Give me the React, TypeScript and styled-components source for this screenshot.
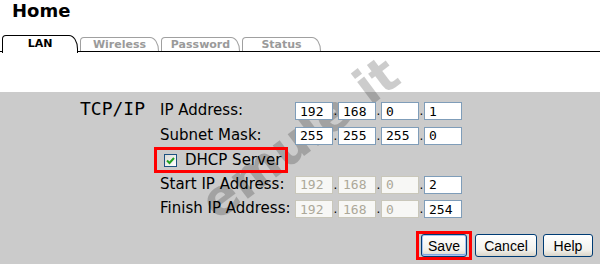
import styled, { createGlobalStyle } from 'styled-components';

const GlobalStyle = createGlobalStyle`
	html, body {
		margin: 0;
		padding: 0;
		background: #ffffff;
	}
`;

const Page = styled.div`
	position: relative;
	width: 600px;
	height: 264px;
	overflow: hidden;
	background: #ffffff;
	font-family: "DejaVu Sans", Verdana, sans-serif;
	color: #000000;
`;

const Title = styled.h1`
	margin: 0;
	padding: 0 12px;
	height: 20px;
	line-height: 21px;
	font-size: 18px;
	font-weight: bold;
`;

const TabBar = styled.div`
	display: flex;
	align-items: flex-end;
	margin-top: 15px;
	height: 16px;
	border-bottom: 1.5px solid #000000;
`;

const Tab = styled.div<{ $active?: boolean, $width: number }>`
	box-sizing: border-box;
	width: ${(props) => props.$width}px;
	height: ${(props) => (props.$active ? 17.5 : 14.5)}px;
	margin-left: 2px;
	margin-bottom: ${(props) => (props.$active ? -1.5 : 0)}px;
	background: #ffffff;
	border: 1px solid ${(props) => (props.$active ? '#000000' : '#a0a0a0')};
	border-bottom: none;
	border-radius: 4px 9px 0 0 / 4px 14px 0 0;
	font-size: 11px;
	font-weight: bold;
	line-height: ${(props) => (props.$active ? 15 : 13)}px;
	text-align: center;
	color: ${(props) => (props.$active ? '#000000' : '#9a9a9a')};
	position: relative;
	z-index: 1;
`;

const Panel = styled.div`
	margin-top: 40px;
	height: 172px;
	box-sizing: border-box;
	padding: 10px 7px 0 0;
	background: #cbcbcb;
	display: flex;
	flex-direction: column;
`;

const FormGrid = styled.div`
	position: relative;
	z-index: 1;
	display: grid;
	grid-template-columns: 160px 135px auto;
	grid-auto-rows: 18px;
	row-gap: 6.5px;
	align-items: center;
`;

const Section = styled.div`
	grid-column: 1;
	grid-row: 1;
	align-self: start;
	margin-top: -4px;
	padding-right: 15px;
	text-align: right;
	font-family: "DejaVu Sans Mono", "Liberation Mono", monospace;
	font-size: 18px;
	line-height: 22px;
`;

const Label = styled.div`
	grid-column: 2;
	font-size: 15px;
	line-height: 18px;
	white-space: nowrap;
	margin-top: -2px;
`;

const IpGroup = styled.div`
	grid-column: 3;
	display: flex;
	align-items: center;
`;

const IpInput = styled.input`
	box-sizing: border-box;
	width: 38px;
	height: 18px;
	margin: 0;
	padding: 0 0 0 4px;
	border: 1px solid #7f9db9;
	background: #ffffff;
	font-family: "DejaVu Sans Mono", "Liberation Mono", monospace;
	font-size: 13px;
	color: #000000;
	outline: none;

	&:disabled {
		border-color: #c9c7ba;
		background: #f7f7f5;
		color: #aca899;
	}
`;

const Dot = styled.span`
	width: 5px;
	text-align: center;
	font-size: 12px;
	line-height: 18px;
	align-self: flex-end;
`;

const Highlight = styled.div`
	grid-column: 2;
	box-sizing: border-box;
	margin-left: -6px;
	width: 134px;
	height: 26px;
	border: 3px solid #ff0000;
	display: flex;
	align-items: center;
	gap: 8px;
	padding-left: 7px;
	font-size: 15px;
	white-space: nowrap;
`;

const CheckBox = styled.span`
	box-sizing: border-box;
	width: 13px;
	height: 13px;
	border: 1px solid #1c5180;
	background: linear-gradient(135deg, #dcdcd7, #ffffff);
	display: flex;
	align-items: center;
	justify-content: center;
	flex-shrink: 0;
`;

const ButtonRow = styled.div`
	position: relative;
	z-index: 1;
	margin-top: 13px;
	display: flex;
	justify-content: flex-end;
	align-items: center;
	gap: 6px;
`;

const SaveFrame = styled.div`
	border: 3px solid #ff0000;
	padding: 0 2px;
	margin-right: -3px;
	display: flex;
`;

const Button = styled.button<{ $width: number }>`
	box-sizing: border-box;
	width: ${(props) => props.$width}px;
	height: 23px;
	padding: 0;
	border: 1px solid #003c74;
	border-radius: 3px;
	background: linear-gradient(#ffffff, #f3f2ed 70%, #d9d5c9);
	font-family: "Liberation Sans", Arial, sans-serif;
	font-size: 14px;
	color: #000000;
`;

const SaveButton = styled(Button)`
	box-shadow: inset 0 0 0 1px #a8c4ef, inset 0 -1px 0 1px #7ea3e0;
`;

const Watermark = styled.span`
	position: absolute;
	left: 300px;
	top: 138px;
	transform: translate(-50%, -50%) rotate(-37deg);
	font-family: "DejaVu Sans", Verdana, sans-serif;
	font-weight: bold;
	font-size: 50px;
	color: rgba(0, 0, 0, 0.2);
	pointer-events: none;
	white-space: nowrap;
`;

const tabs = [
	{ name: 'LAN', width: 76, active: true },
	{ name: 'Wireless', width: 79 },
	{ name: 'Password', width: 79 },
	{ name: 'Status', width: 79 },
];

type IpProps = {
	values: string[],
	lockedCount?: number,
};

const IpFields = ({ values, lockedCount = 0 }: IpProps) => (
	<IpGroup>
		{values.map((value, i) => (
			<span key={i} style={{ display: 'contents' }}>
				{i > 0 && <Dot>.</Dot>}
				<IpInput defaultValue={value} disabled={i < lockedCount} readOnly />
			</span>
		))}
	</IpGroup>
);

const App = () => (
	<Page>
		<GlobalStyle />
		<Title>Home</Title>
		<TabBar>
			{tabs.map((tab) => (
				<Tab key={tab.name} $active={tab.active} $width={tab.width}>{tab.name}</Tab>
			))}
		</TabBar>
		<Watermark>emule.it</Watermark>
		<Panel>
			<FormGrid>
				<Section>TCP/IP</Section>
				<Label>IP Address:</Label>
				<IpFields values={['192', '168', '0', '1']} />
				<Label>Subnet Mask:</Label>
				<IpFields values={['255', '255', '255', '0']} />
				<Highlight>
					<CheckBox>
						<svg width="9" height="9" viewBox="0 0 9 9">
							<path d="M1 4.5 L3.5 7 L8 2" fill="none" stroke="#21a121" strokeWidth="2" />
						</svg>
					</CheckBox>
					DHCP Server
				</Highlight>
				<Label>Start IP Address:</Label>
				<IpFields values={['192', '168', '0', '2']} lockedCount={3} />
				<Label>Finish IP Address:</Label>
				<IpFields values={['192', '168', '0', '254']} lockedCount={3} />
			</FormGrid>
			<ButtonRow>
				<SaveFrame>
					<SaveButton $width={46}>Save</SaveButton>
				</SaveFrame>
				<Button $width={62}>Cancel</Button>
				<Button $width={50}>Help</Button>
			</ButtonRow>
		</Panel>
	</Page>
);

export default App;
